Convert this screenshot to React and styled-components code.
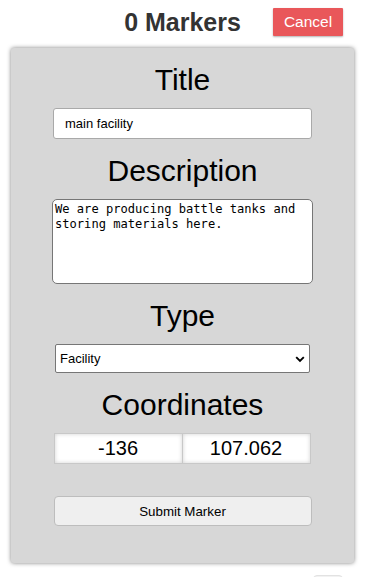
import React from "react";
import styled, { createGlobalStyle } from "styled-components";

const Global = createGlobalStyle`
  html, body { margin: 0; padding: 0; background: #ffffff; }
  body { font-family: "Liberation Sans", Arial, sans-serif; color: #000; }
  * { box-sizing: border-box; }
`;

const Header = styled.header`
  display: grid;
  grid-template-columns: 1fr auto 1fr;
  align-items: center;
  height: 48px;
  padding: 8px 0 12px;
`;

const Heading = styled.h1`
  grid-column: 2;
  margin: 0;
  font-size: 25px;
  line-height: 28px;
  font-weight: 700;
  color: #333333;
`;

const CancelButton = styled.button`
  grid-column: 3;
  justify-self: end;
  margin-right: 22px;
  width: 70px;
  height: 28px;
  border: none;
  border-radius: 1px;
  background: #e9575a;
  color: #ffffff;
  font-family: "Liberation Sans", Arial, sans-serif;
  font-size: 15.5px;
  box-shadow: 0 1px 2px rgba(0, 0, 0, 0.3);
  padding: 0;
`;

const Panel = styled.form`
  margin: 0 11px;
  height: 515px;
  background: #d7d7d7;
  border-radius: 3px;
  box-shadow: 0 0 4px rgba(0, 0, 0, 0.5);
  padding: 14px 0 37px;
  display: flex;
  flex-direction: column;
  align-items: center;
`;

const Field = styled.div`
  display: flex;
  flex-direction: column;
  align-items: center;
  margin-top: ${(p) => p.$gap || 0}px;
`;

const Label = styled.label`
  font-size: 30px;
  line-height: 36px;
  margin-bottom: 10px;
  color: #000;
`;

const TextInput = styled.input`
  width: 259px;
  height: 31px;
  border: 1px solid #a9a9a9;
  border-radius: 3px;
  background: #fff;
  padding: 0 11px;
  font-family: "Liberation Sans", Arial, sans-serif;
  font-size: 13px;
  color: #000;
  outline: none;
`;

const TextArea = styled.textarea`
  width: 261px;
  height: 85px;
  border: 1px solid #767676;
  border-radius: 5px;
  background: #fff;
  padding: 2px;
  font-family: "DejaVu Sans Mono", "Liberation Mono", monospace;
  font-size: 12.1px;
  line-height: 14.7px;
  color: #000;
  resize: none;
  outline: none;
`;

const SelectWrap = styled.div`
  position: relative;
  width: 255px;
  height: 29px;
`;

const Select = styled.select`
  appearance: none;
  width: 100%;
  height: 100%;
  border: 1px solid #767676;
  border-radius: 2px;
  background: #fff;
  padding: 0 20px 0 4px;
  font-family: "Liberation Sans", Arial, sans-serif;
  font-size: 13px;
  color: #000;
  outline: none;
`;

const Chevron = styled.svg`
  position: absolute;
  right: 5px;
  top: 12px;
  pointer-events: none;
`;

const CoordRow = styled.div`
  display: flex;
  width: 258px;
`;

const CoordInput = styled.input`
  width: 129px;
  height: 31px;
  border: 1px solid #c8c8c8;
  background: #fff;
  box-shadow: inset 0 0 4px rgba(0, 0, 0, 0.18);
  text-align: center;
  font-family: "Liberation Sans", Arial, sans-serif;
  font-size: 20px;
  color: #000;
  padding: 0;
  outline: none;
  & + & { margin-left: -1px; }
`;

const SubmitButton = styled.button`
  margin-top: 32px;
  width: 258px;
  height: 30px;
  border: 1px solid #bdbdbd;
  border-radius: 4px;
  background: #efefef;
  font-family: "Liberation Sans", Arial, sans-serif;
  font-size: 13.33px;
  color: #000;
`;

const Footer = styled.div`
  display: flex;
  justify-content: flex-end;
  padding: 12px 22px 0 0;
`;

const MiniButton = styled.div`
  width: 30px;
  height: 20px;
  border: 1px solid #e2e2e2;
  border-radius: 4px;
  background: #f2f2f2;
`;

export default function App() {
  return (
    <>
      <Global />
      <Header>
        <Heading>0 Markers</Heading>
        <CancelButton type="button">Cancel</CancelButton>
      </Header>
      <Panel onSubmit={(e) => e.preventDefault()}>
        <Field>
          <Label>Title</Label>
          <TextInput defaultValue="main facility" />
        </Field>
        <Field $gap={14}>
          <Label>Description</Label>
          <TextArea defaultValue="We are producing battle tanks and storing materials here." />
        </Field>
        <Field $gap={14}>
          <Label>Type</Label>
          <SelectWrap>
            <Select defaultValue="Facility">
              <option>Facility</option>
              <option>Base</option>
              <option>Outpost</option>
            </Select>
            <Chevron width="10" height="7" viewBox="0 0 10 7">
              <path d="M1.2 1.2 L5 5 L8.8 1.2" fill="none" stroke="#000" strokeWidth="1.9" />
            </Chevron>
          </SelectWrap>
        </Field>
        <Field $gap={14}>
          <Label>Coordinates</Label>
          <CoordRow>
            <CoordInput defaultValue="-136" />
            <CoordInput defaultValue="107.062" />
          </CoordRow>
        </Field>
        <SubmitButton type="submit">Submit Marker</SubmitButton>
      </Panel>
      <Footer>
        <MiniButton />
      </Footer>
    </>
  );
}
